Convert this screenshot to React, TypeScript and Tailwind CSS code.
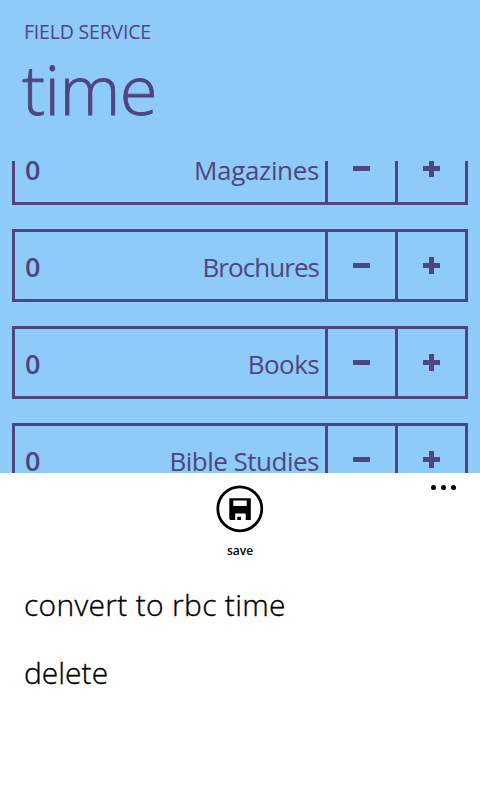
const ROWS = [
  { label: "Magazines", spacing: "tracking-[-0.35px]" },
  { label: "Brochures", spacing: "tracking-[-0.95px]" },
  { label: "Books", spacing: "tracking-[-0.6px]" },
  { label: "Bible Studies", spacing: "tracking-[-0.5px]" },
];

function CounterRow({ label, spacing }: { label: string; spacing: string }) {
  return (
    <div className="flex h-[73px] shrink-0 border-[3px] border-[#4f4580]">
      <div className="flex w-[310px] items-start justify-between pt-[17px] pr-[6px] pl-[10px] text-[26px] leading-[36px]">
        <span className="text-[27px] font-semibold">0</span>
        <span className={spacing}>{label}</span>
      </div>
      <button className="flex w-[70px] justify-center border-l-[3px] border-[#4f4580] pt-[31px]">
        <span className="h-[5px] w-[17px] bg-[#4f4580]" />
      </button>
      <button className="flex w-[70px] justify-center border-l-[3px] border-[#4f4580] pt-[25px]">
        <svg width="17" height="17" viewBox="0 0 17 17" fill="currentColor" shapeRendering="crispEdges">
          <path d="M6 0h5v6h6v5h-6v6H6v-6H0V6h6z" />
        </svg>
      </button>
    </div>
  );
}

export default function App() {
  return (
    <div className="flex h-[800px] w-[480px] flex-col overflow-hidden bg-[#8fcbf8] font-['Open_Sans','Noto_Sans',sans-serif] text-[#4f4580]">
      <header className="h-[161px] shrink-0">
        <div className="pt-[18px] pl-[24px] text-[19.5px] leading-[28px] tracking-[-0.2px]">FIELD SERVICE</div>
        <h1 className="pl-[22px] text-[69px] leading-[84px] font-light tracking-[-0.6px] [-webkit-text-stroke:0.8px_#4f4580]">time</h1>
      </header>
      <main className="h-[312px] shrink-0 overflow-hidden px-[12px]">
        <div className="-mt-[29px] flex flex-col gap-[24px]">
          {ROWS.map((row) => (
            <CounterRow key={row.label} {...row} />
          ))}
        </div>
      </main>
      <footer className="relative flex-1 bg-white text-black">
        <button className="absolute top-[12px] right-[24px] flex gap-[5px]" aria-label="more">
          <span className="size-[5px] rounded-full bg-black" />
          <span className="size-[5px] rounded-full bg-black" />
          <span className="size-[5px] rounded-full bg-black" />
        </button>
        <div className="flex flex-col items-center pt-[12px]">
          <svg width="48" height="48" viewBox="0 0 48 48">
            <circle cx="23.8" cy="23.8" r="22" fill="none" stroke="black" strokeWidth="2.8" />
            <path d="M13.3 13.3h21.5V35H14.3l-1-1z" fill="black" />
            <path d="M17.3 15.5h13.4V21H17.3zM19.2 28.5h10.5V35H25v-3.3h-3.7V35h-2.1z" fill="white" />
          </svg>
          <span className="mt-[10px] text-[12px] leading-[16px] font-semibold">save</span>
        </div>
        <nav className="flex flex-col gap-[28px] pt-[26px] pl-[24px] text-[30px] leading-[40px] font-light [-webkit-text-stroke:0.35px_black]">
          <span className="tracking-[0.3px]">convert to rbc time</span>
          <span>delete</span>
        </nav>
      </footer>
    </div>
  );
}
